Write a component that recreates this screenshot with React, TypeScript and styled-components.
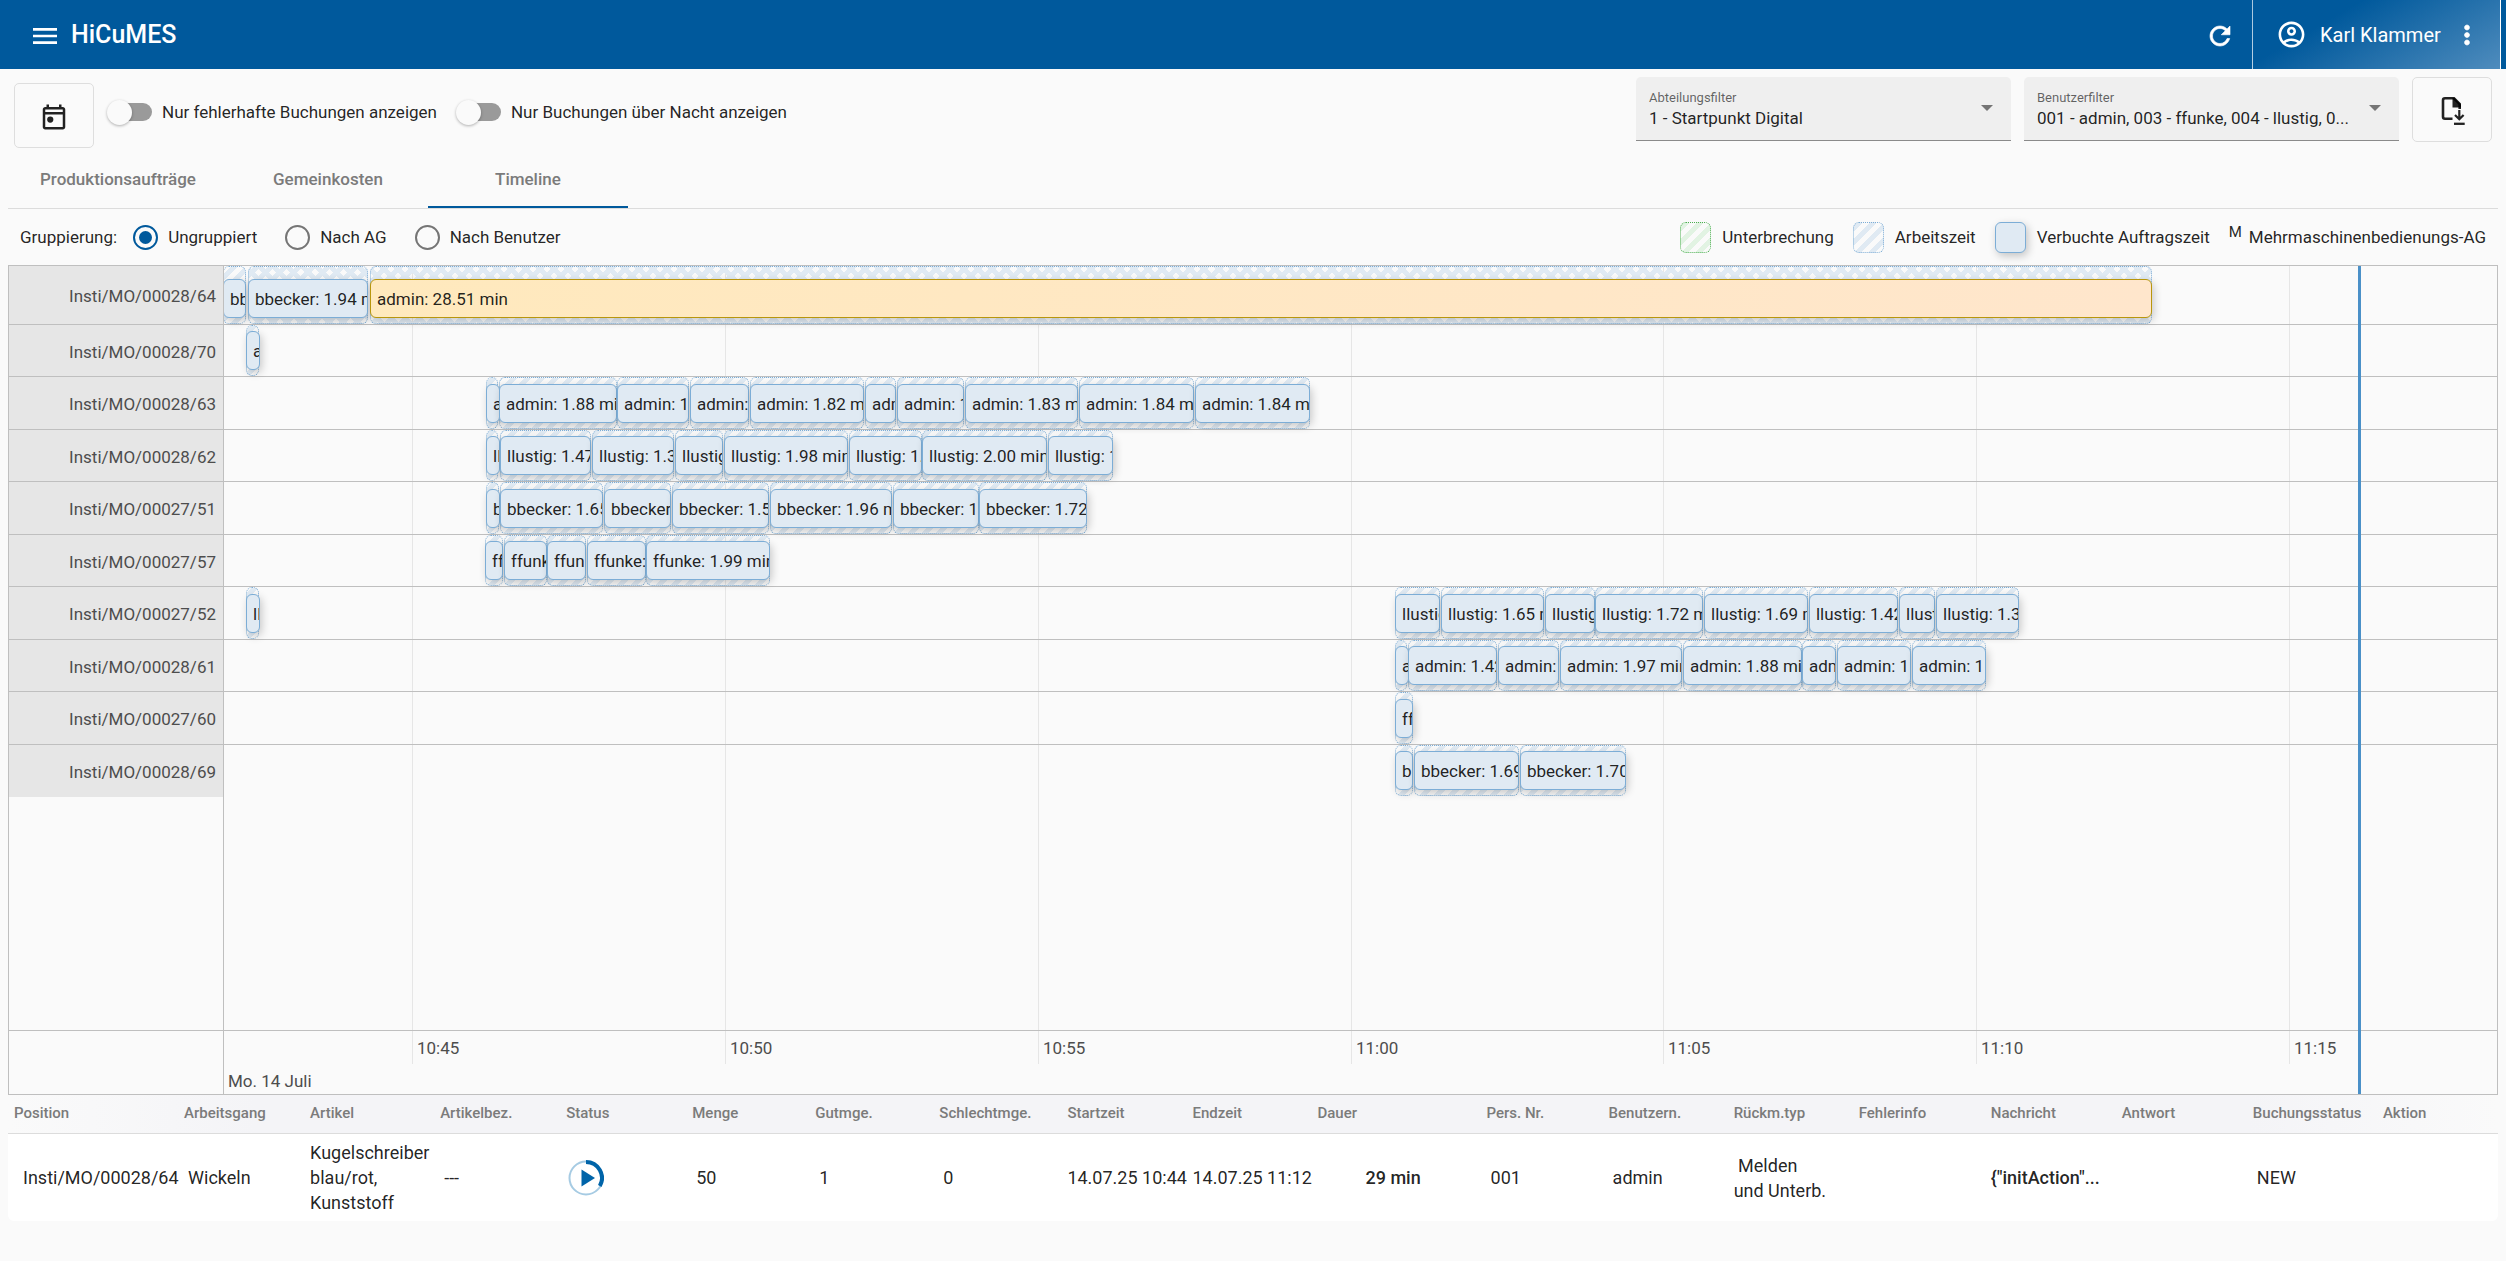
import React, { useState } from "react";
import styled, { createGlobalStyle, css } from "styled-components";

const blue = "#00599c";

const GlobalStyle = createGlobalStyle`
  * { box-sizing: border-box; }
  body {
    margin: 0;
    background: #fff;
    color: rgba(0, 0, 0, 0.87);
    font: 400 17px/24px Roboto, "Liberation Sans", sans-serif;
  }
  button, select, input { font: inherit; color: inherit; }
`;

const Page = styled.div`
  background: #fafafa;
  padding-bottom: 40px;
`;

const Header = styled.header`
  display: flex;
  align-items: stretch;
  height: 69px;
  background: ${blue};
  color: #fff;
  padding-right: 5px;
`;

const IconButton = styled.button`
  display: flex;
  align-items: center;
  justify-content: center;
  border: 0;
  padding: 0;
  background: none;
  color: inherit;
  cursor: pointer;
`;

const BarButton = styled(IconButton)`
  padding-top: 3px;
`;

const Brand = styled.div`
  display: flex;
  align-items: center;
  gap: 10px;
  padding-left: 29px;
  flex: 1;
`;

const Title = styled.h1`
  margin: 0;
  font-size: 25px;
  line-height: 32px;
  font-weight: 500;
`;

const RefreshButton = styled(BarButton)`
  width: 64px;
`;

const UserArea = styled.div`
  display: flex;
  align-items: center;
  width: 249px;
  padding: 0 18px 0 23px;
  border: solid rgba(255, 255, 255, 0.6);
  border-width: 0 1px;
  border-right-color: #fff;
  background: linear-gradient(150deg, ${blue} 30%, #4f8cbd 100%);
  font-size: 20px;
`;

const UserName = styled.span`
  flex: 1;
  padding-left: 13px;
  white-space: nowrap;
`;

const Toolbar = styled.div`
  display: flex;
  align-items: flex-start;
  padding: 8px 14px 0;
`;

const SquareButton = styled(IconButton)`
  width: 80px;
  height: 65px;
  padding-top: 3px;
  border: 1px solid #dedede;
  border-radius: 5px;
`;

const Switches = styled.div`
  display: flex;
  flex: 1;
  align-items: center;
  gap: 13px;
  padding-top: 6px;
`;

const SwitchLabel = styled.label`
  display: flex;
  align-items: center;
  gap: 10px;
  padding: 0 6px 7px 0;
  white-space: nowrap;
`;

const SwitchInput = styled.input`
  appearance: none;
  display: flex;
  align-items: center;
  width: 45px;
  height: 18px;
  margin: 0;
  border-radius: 9px;
  background: linear-gradient(90deg, transparent 9px, #9a9a9a 9px);
  &::before {
    content: "";
    width: 25px;
    height: 25px;
    flex: none;
    border-radius: 50%;
    background: #fafafa;
    box-shadow: 0 1px 3px rgba(0, 0, 0, 0.3);
  }
  &:checked { justify-content: flex-end; background: #7facce; }
`;

const Filters = styled.div`
  display: flex;
  gap: 13px;
`;

const Field = styled.div`
  position: relative;
  display: flex;
  flex-direction: column;
  width: 375px;
  height: 64px;
  border-bottom: 1px solid #8a8a8a;
  border-radius: 5px 5px 0 0;
  background: #efefef;
`;

const FieldLabel = styled.label`
  padding: 12px 13px 0;
  height: 28px;
  font-size: 13px;
  line-height: 18px;
  color: rgba(0, 0, 0, 0.6);
`;

const FieldSelect = styled.select`
  appearance: none;
  border: 0;
  background: none;
  height: 26px;
  padding: 0 32px 0 13px;
  white-space: nowrap;
  overflow: hidden;
`;

const Arrow = styled.span`
  position: absolute;
  right: 18px;
  top: 28px;
  border: 6px solid transparent;
  border-top-color: #757575;
  border-bottom: 0;
  pointer-events: none;
`;

const Main = styled.main`
  padding: 0 8px;
`;

const Tabs = styled.div`
  display: flex;
  height: 61px;
  border-bottom: 1px solid #dcdcdc;
`;

const Tab = styled.button<{ $active?: boolean }>`
  min-width: 200px;
  padding: 3px 32px 0;
  border: 0;
  border-bottom: 2px solid ${(p) => (p.$active ? blue : "transparent")};
  background: none;
  font-weight: 500;
  color: #7b7b7b;
`;

const Options = styled.div`
  display: flex;
  align-items: center;
  justify-content: space-between;
  height: 56px;
  padding: 0 12px;
`;

const RadioGroup = styled.div`
  display: flex;
  align-items: center;
`;

const RadioLabel = styled.label`
  display: flex;
  align-items: center;
  gap: 10px;
  margin-right: 28px;
`;

const Caption = styled.span`
  margin-right: 16px;
`;

const Radio = styled.input`
  appearance: none;
  display: grid;
  place-items: center;
  width: 25px;
  height: 25px;
  margin: 0;
  border: 2px solid #757575;
  border-radius: 50%;
  &:checked { border-color: ${blue}; }
  &:checked::before {
    content: "";
    width: 13px;
    height: 13px;
    border-radius: 50%;
    background: ${blue};
  }
`;

const Legend = styled.div`
  display: flex;
  align-items: center;
  gap: 19px;
`;

const LegendItem = styled.span`
  display: flex;
  align-items: center;
  gap: 11px;
  white-space: nowrap;
`;

const MachineMark = styled.sup`
  align-self: flex-start;
  font-size: 15px;
  line-height: 15px;
  margin-right: -4px;
`;

type Kind = "break" | "work" | "booked";

const Swatch = styled.span<{ $kind: Kind }>`
  width: 31px;
  height: 31px;
  border-radius: 6px;
  ${(p) =>
    p.$kind === "booked"
      ? css`
          border: 1px solid #7cadd6;
          background: #e0eaf3;
          box-shadow: 2px 3px 8px rgba(0, 0, 0, 0.22);
        `
      : css`
          border: 1px dotted ${p.$kind === "break" ? "#4caf50" : "#7cadd6"};
          background: repeating-linear-gradient(
            -45deg,
            transparent 0 5px,
            ${p.$kind === "break" ? "#e2f3e3" : "#e0eaf3"} 5px 10px
          );
        `}
`;

const line = "#bfbfbf";

const Chart = styled.section`
  display: grid;
  grid-template-columns: 215px 1fr;
  grid-template-rows: 764px 64px;
  border: 1px solid ${line};
  position: relative;
`;

const LabelColumn = styled.div`
  border-right: 1px solid ${line};
`;

const Plot = styled.div`
  position: relative;
  overflow: hidden;
`;

const rowSize = css`
  height: 53px;
  border-bottom: 1px solid ${line};
  &:nth-child(even) { height: 52px; }
  &:first-child { height: 59px; }
  &:last-child { border-bottom-color: transparent; }
`;

const RowLabel = styled.div`
  ${rowSize}
  display: flex;
  align-items: center;
  justify-content: flex-end;
  padding: 2px 7px 0 0;
  background: #e6e6e6;
  color: #4d4d4d;
`;

const Row = styled.div`
  ${rowSize}
  position: relative;
`;

const Shift = styled.div<{ $dense?: boolean }>`
  position: absolute;
  top: 0;
  bottom: 0;
  border: 1px dotted #7cadd6;
  border-radius: 6px;
  background: ${(p) =>
      p.$dense ? "repeating-linear-gradient(45deg, transparent 0 5px, #e0eaf3 5px 10px)," : ""}
    repeating-linear-gradient(-45deg, transparent 0 5px, #e0eaf3 5px 10px);
`;

const Booking = styled.div<{ $running?: boolean }>`
  position: absolute;
  top: 7px;
  height: 39px;
  padding: 0 6px;
  overflow: hidden;
  border: 1px solid #7cadd6;
  border-radius: 6px;
  background: #e0eaf3;
  box-shadow: 2px 3px 8px rgba(0, 0, 0, 0.2);
  line-height: 38px;
  white-space: nowrap;
  ${Row}:nth-child(even) & { top: 6px; }
  ${Row}:first-child & { top: 13px; }
  ${(p) =>
    p.$running &&
    css`
      border-color: #b8960c;
      background: linear-gradient(90deg, #ffe9bd, #ffe6cc);
    `}
`;

const GridLine = styled.i`
  position: absolute;
  top: 0;
  bottom: 0;
  width: 1px;
  background: #e6e6e6;
`;

const Axis = styled.div`
  position: relative;
  border-top: 1px solid ${line};
  color: #4d4d4d;
`;

const AxisCorner = styled.div`
  border-top: 1px solid ${line};
  border-right: 1px solid ${line};
`;

const Tick = styled.span`
  position: absolute;
  top: 0;
  height: 33px;
  padding: 5px 0 0 4px;
  border-left: 1px solid #e6e6e6;
`;

const DayLabel = styled.span`
  display: block;
  padding: 38px 0 0 4px;
`;

const NowTrack = styled.div`
  position: absolute;
  inset: 0 0 0 215px;
  pointer-events: none;
`;

const NowLine = styled.i`
  position: absolute;
  top: 0;
  bottom: 0;
  width: 3px;
  background: #4a90c8;
`;

const Table = styled.table`
  width: 100%;
  table-layout: fixed;
  border-collapse: separate;
  border-spacing: 0;
  text-align: left;
`;

const HeadRow = styled.tr`
  background: linear-gradient(90deg, #fafafa, #f4f4f7 10%, #f4f4f7 90%, #fafafa);
`;

const Th = styled.th`
  height: 39px;
  padding: 0 0 2px;
  border-bottom: 1px solid #dcdcdc;
  font-size: 15px;
  line-height: 20px;
  font-weight: 500;
  color: #7b7b7b;
  white-space: nowrap;
  &:first-child { padding-left: 6px; }
`;

const Td = styled.td<{ $indent?: number; $strong?: boolean }>`
  height: 87px;
  padding: 0 0 0 ${(p) => p.$indent ?? 4}px;
  background: #fff;
  font-size: 18px;
  line-height: 25px;
  font-weight: ${(p) => (p.$strong ? 500 : 400)};
  white-space: pre-line;
  &:first-child { padding-left: 15px; border-bottom-left-radius: 6px; }
  &:last-child { border-bottom-right-radius: 6px; }
`;

const StatusMark = styled.svg`
  display: block;
`;

/* The visible window spans 2273 units; five minutes are 313 units. */
const SPAN = 2273;
const at = (v: number) => `${(v / SPAN) * 100}%`;

type Entry = [number, number, string];
const rows: { id: string; entries: Entry[] }[] = [
  {
    id: "Insti/MO/00028/64",
    entries: [
      [-1, 22, "bbecker: 0.52 min"],
      [24, 144, "bbecker: 1.94 min"],
      [146, 1928, "admin: 28.51 min"],
    ],
  },
  { id: "Insti/MO/00028/70", entries: [[22, 35, "admin: 0.20 min"]] },
  {
    id: "Insti/MO/00028/63",
    entries: [
      [262, 274, "admin: 0.18 min"],
      [275, 393, "admin: 1.88 min"],
      [393, 465, "admin: 1.14 min"],
      [466, 525, "admin: 0.95 min"],
      [526, 640, "admin: 1.82 min"],
      [641, 672, "admin: 0.50 min"],
      [673, 740, "admin: 1.08 min"],
      [741, 854, "admin: 1.83 min"],
      [855, 970, "admin: 1.84 min"],
      [971, 1086, "admin: 1.84 min"],
    ],
  },
  {
    id: "Insti/MO/00028/62",
    entries: [
      [262, 274, "llustig: 0.20 min"],
      [276, 367, "llustig: 1.47 min"],
      [368, 450, "llustig: 1.31 min"],
      [451, 499, "llustig: 0.78 min"],
      [500, 624, "llustig: 1.98 min"],
      [625, 698, "llustig: 1.17 min"],
      [698, 823, "llustig: 2.00 min"],
      [824, 889, "llustig: 1.04 min"],
    ],
  },
  {
    id: "Insti/MO/00027/51",
    entries: [
      [262, 275, "bbecker: 0.20 min"],
      [276, 379, "bbecker: 1.65 min"],
      [380, 447, "bbecker: 1.07 min"],
      [448, 545, "bbecker: 1.56 min"],
      [546, 668, "bbecker: 1.96 min"],
      [669, 755, "bbecker: 1.37 min"],
      [755, 863, "bbecker: 1.72 min"],
    ],
  },
  {
    id: "Insti/MO/00027/57",
    entries: [
      [261, 279, "ffunke: 0.28 min"],
      [280, 323, "ffunke: 0.68 min"],
      [323, 362, "ffunke: 0.62 min"],
      [363, 422, "ffunke: 0.94 min"],
      [422, 546, "ffunke: 1.99 min"],
    ],
  },
  {
    id: "Insti/MO/00027/52",
    entries: [
      [22, 35, "llustig: 0.20 min"],
      [1171, 1216, "llustig: 0.73 min"],
      [1217, 1320, "llustig: 1.65 min"],
      [1321, 1371, "llustig: 0.79 min"],
      [1371, 1479, "llustig: 1.72 min"],
      [1480, 1584, "llustig: 1.69 min"],
      [1585, 1674, "llustig: 1.42 min"],
      [1675, 1711, "llustig: 0.58 min"],
      [1712, 1795, "llustig: 1.33 min"],
    ],
  },
  {
    id: "Insti/MO/00028/61",
    entries: [
      [1171, 1183, "admin: 0.20 min"],
      [1184, 1273, "admin: 1.42 min"],
      [1274, 1335, "admin: 0.98 min"],
      [1336, 1458, "admin: 1.97 min"],
      [1459, 1578, "admin: 1.88 min"],
      [1578, 1612, "admin: 0.54 min"],
      [1613, 1687, "admin: 1.18 min"],
      [1688, 1762, "admin: 1.18 min"],
    ],
  },
  { id: "Insti/MO/00027/60", entries: [[1171, 1189, "ffunke: 0.28 min"]] },
  {
    id: "Insti/MO/00028/69",
    entries: [
      [1171, 1189, "bbecker: 0.28 min"],
      [1190, 1295, "bbecker: 1.69 min"],
      [1296, 1402, "bbecker: 1.70 min"],
    ],
  },
];

const ticks: [number, string][] = [
  [188, "10:45"],
  [501, "10:50"],
  [814, "10:55"],
  [1127, "11:00"],
  [1439, "11:05"],
  [1752, "11:10"],
  [2065, "11:15"],
];

const columns: [string, number][] = [
  ["Position", 176],
  ["Arbeitsgang", 126],
  ["Artikel", 130],
  ["Artikelbez.", 126],
  ["Status", 126],
  ["Menge", 123],
  ["Gutmge.", 124],
  ["Schlechtmge.", 128],
  ["Startzeit", 125],
  ["Endzeit", 125],
  ["Dauer", 169],
  ["Pers. Nr.", 122],
  ["Benutzern.", 125],
  ["Rückm.typ", 125],
  ["Fehlerinfo", 132],
  ["Nachricht", 131],
  ["Antwort", 131],
  ["Buchungsstatus", 130],
  ["Aktion", 115],
];
const columnTotal = columns.reduce((sum, c) => sum + c[1], 0);

const Glyph = ({ size = 30, stroke = 0, d }: { size?: number; stroke?: number; d: string }) => (
  <svg
    width={size}
    height={size}
    viewBox="0 0 24 24"
    fill="currentColor"
    stroke={stroke ? "currentColor" : "none"}
    strokeWidth={stroke}
    aria-hidden="true"
  >
    <path d={d} />
  </svg>
);

const ExportIcon = () => (
  <svg width="30" height="30" viewBox="0 0 30 30" fill="none" stroke="currentColor" strokeWidth="2.6" aria-hidden="true">
    <path d="M15.500 22.700H8a2 2 0 0 1-2-2V4.300a2 2 0 0 1 2-2h9l5.700 5.700v5" />
    <path d="M15.500 2v9.500h8.500v-3L17.500 2z" fill="currentColor" stroke="none" />
    <path d="M22.300 14v8.500M18 19l4.300 4.300L26.600 19" strokeWidth="2.200" />
    <path d="M17 27.800h10.700" strokeWidth="2.300" />
  </svg>
);

const StatusIcon = () => (
  <StatusMark width="36" height="36" viewBox="0 0 36 36" role="img" aria-label="running">
    <circle cx="18" cy="18" r="16.500" fill="none" stroke="#a6cbe3" strokeWidth="2" />
    <path d="M18 2a16 16 0 0 1 13.800 24" fill="none" stroke="#0064a9" strokeWidth="4" />
    <path d="M13.500 9.500v17L27 18z" fill="#0064a9" />
  </StatusMark>
);

export default function App() {
  const [group, setGroup] = useState("Ungruppiert");
  return (
    <>
      <GlobalStyle />
      <Page>
        <Header>
          <Brand>
            <BarButton aria-label="Menü">
              <Glyph size={32} d="M3 18h18v-2H3v2zm0-5h18v-2H3v2zm0-7v2h18V6H3z" />
            </BarButton>
            <Title>HiCuMES</Title>
          </Brand>
          <RefreshButton aria-label="Aktualisieren">
            <Glyph stroke={0.5} d="M17.65 6.35C16.2 4.9 14.21 4 12 4c-4.42 0-7.99 3.58-7.99 8s3.57 8 7.99 8c3.73 0 6.84-2.55 7.73-6h-2.08c-.82 2.33-3.04 4-5.65 4-3.31 0-6-2.69-6-6s2.69-6 6-6c1.66 0 3.14.69 4.22 1.78L13 11h7V4l-2.35 2.35z" />
          </RefreshButton>
          <UserArea>
            <Glyph
              size={31}
              d="M12 2C6.48 2 2 6.48 2 12s4.48 10 10 10 10-4.48 10-10S17.52 2 12 2zM7.35 18.5C8.66 17.56 10.26 17 12 17s3.34.56 4.65 1.5C15.34 19.44 13.74 20 12 20s-3.34-.56-4.65-1.5zm10.79-1.38C16.45 15.8 14.32 15 12 15s-4.45.8-6.14 2.12C4.7 15.73 4 13.95 4 12c0-4.42 3.58-8 8-8s8 3.58 8 8c0 1.95-.7 3.73-1.86 5.12zM12 6c-1.93 0-3.5 1.57-3.5 3.5S10.07 13 12 13s3.5-1.57 3.5-3.5S13.93 6 12 6zm0 5c-.83 0-1.5-.67-1.5-1.5S11.17 8 12 8s1.5.67 1.5 1.5S12.83 11 12 11z"
            />
            <UserName>Karl Klammer</UserName>
            <IconButton aria-label="Mehr">
              <Glyph d="M12 8c1.1 0 2-.9 2-2s-.9-2-2-2-2 .9-2 2 .9 2 2 2zm0 2c-1.1 0-2 .9-2 2s.9 2 2 2 2-.9 2-2-.9-2-2-2zm0 6c-1.1 0-2 .9-2 2s.9 2 2 2 2-.9 2-2-.9-2-2-2z" stroke={0.5} />
            </IconButton>
          </UserArea>
        </Header>

        <Toolbar>
          <Switches>
            <SquareButton aria-label="Datum wählen">
              <Glyph d="M19 4h-1V2h-2v2H8V2H6v2H5c-1.11 0-1.99.9-1.99 2L3 20c0 1.1.89 2 2 2h14c1.1 0 2-.9 2-2V6c0-1.1-.9-2-2-2zm0 16H5V10h14v10zm0-12H5V6h14v2zM9 11.500a2.500 2.500 0 1 0 0 5a2.500 2.500 0 0 0 0-5z" />
            </SquareButton>
            <SwitchLabel>
              <SwitchInput type="checkbox" />
              Nur fehlerhafte Buchungen anzeigen
            </SwitchLabel>
            <SwitchLabel>
              <SwitchInput type="checkbox" />
              Nur Buchungen über Nacht anzeigen
            </SwitchLabel>
          </Switches>
          <Filters>
            <Field>
              <FieldLabel htmlFor="department">Abteilungsfilter</FieldLabel>
              <FieldSelect id="department">
                <option>1 - Startpunkt Digital</option>
              </FieldSelect>
              <Arrow />
            </Field>
            <Field>
              <FieldLabel htmlFor="users">Benutzerfilter</FieldLabel>
              <FieldSelect id="users">
                <option>001 - admin, 003 - ffunke, 004 - llustig, 0...</option>
              </FieldSelect>
              <Arrow />
            </Field>
            <SquareButton aria-label="Exportieren">
              <ExportIcon />
            </SquareButton>
          </Filters>
        </Toolbar>

        <Main>
          <Tabs role="tablist">
            <Tab role="tab">Produktionsaufträge</Tab>
            <Tab role="tab">Gemeinkosten</Tab>
            <Tab role="tab" $active aria-selected="true">
              Timeline
            </Tab>
          </Tabs>

          <Options>
            <RadioGroup role="radiogroup">
              <Caption>Gruppierung:</Caption>
              {["Ungruppiert", "Nach AG", "Nach Benutzer"].map((name) => (
                <RadioLabel key={name}>
                  <Radio type="radio" name="group" checked={group === name} onChange={() => setGroup(name)} />
                  {name}
                </RadioLabel>
              ))}
            </RadioGroup>
            <Legend>
              <LegendItem>
                <Swatch $kind="break" />
                Unterbrechung
              </LegendItem>
              <LegendItem>
                <Swatch $kind="work" />
                Arbeitszeit
              </LegendItem>
              <LegendItem>
                <Swatch $kind="booked" />
                Verbuchte Auftragszeit
              </LegendItem>
              <LegendItem>
                <MachineMark>M</MachineMark>
                Mehrmaschinenbedienungs-AG
              </LegendItem>
            </Legend>
          </Options>

          <Chart>
            <LabelColumn>
              {rows.map((row) => (
                <RowLabel key={row.id}>{row.id}</RowLabel>
              ))}
            </LabelColumn>
            <Plot>
              {ticks.map(([pos, label]) => (
                <GridLine key={label} style={{ left: at(pos) }} />
              ))}
              <div>
                {rows.map((row, r) => (
                  <Row key={row.id}>
                    {row.entries.map(([from, to], i) => (
                      <Shift
                        key={i}
                        $dense={r === 0 && i > 0}
                        style={{ left: at(from), width: at(to - from) }}
                      />
                    ))}
                    {row.entries.map(([from, to, label], i) => (
                      <Booking
                        key={i}
                        $running={label === "admin: 28.51 min"}
                        style={{ left: at(from), width: at(to - from) }}
                      >
                        {label}
                      </Booking>
                    ))}
                  </Row>
                ))}
              </div>
            </Plot>
            <AxisCorner />
            <Axis>
              {ticks.map(([pos, label]) => (
                <Tick key={label} style={{ left: at(pos) }}>
                  {label}
                </Tick>
              ))}
              <DayLabel>Mo. 14 Juli</DayLabel>
            </Axis>
            <NowTrack>
              <NowLine style={{ left: at(2134) }} />
            </NowTrack>
          </Chart>

          <Table>
            <colgroup>
              {columns.map(([name, width]) => (
                <col key={name} style={{ width: `${(width / columnTotal) * 100}%` }} />
              ))}
            </colgroup>
            <thead>
              <HeadRow>
                {columns.map(([name]) => (
                  <Th key={name}>{name}</Th>
                ))}
              </HeadRow>
            </thead>
            <tbody>
              <tr>
                <Td>Insti/MO/00028/64</Td>
                <Td>Wickeln</Td>
                <Td $indent={0}>{"Kugelschreiber\nblau/rot,\nKunststoff"}</Td>
                <Td>---</Td>
                <Td $indent={2}>
                  <StatusIcon />
                </Td>
                <Td>50</Td>
                <Td>1</Td>
                <Td>0</Td>
                <Td $indent={0}>14.07.25 10:44</Td>
                <Td $indent={0}>14.07.25 11:12</Td>
                <Td $indent={48} $strong>29 min</Td>
                <Td>001</Td>
                <Td>admin</Td>
                <Td $indent={0}>{"\u00a0Melden\nund Unterb."}</Td>
                <Td />
                <Td $indent={0} $strong>{'{"initAction"...'}</Td>
                <Td />
                <Td>NEW</Td>
                <Td />
              </tr>
            </tbody>
          </Table>
        </Main>
      </Page>
    </>
  );
}
